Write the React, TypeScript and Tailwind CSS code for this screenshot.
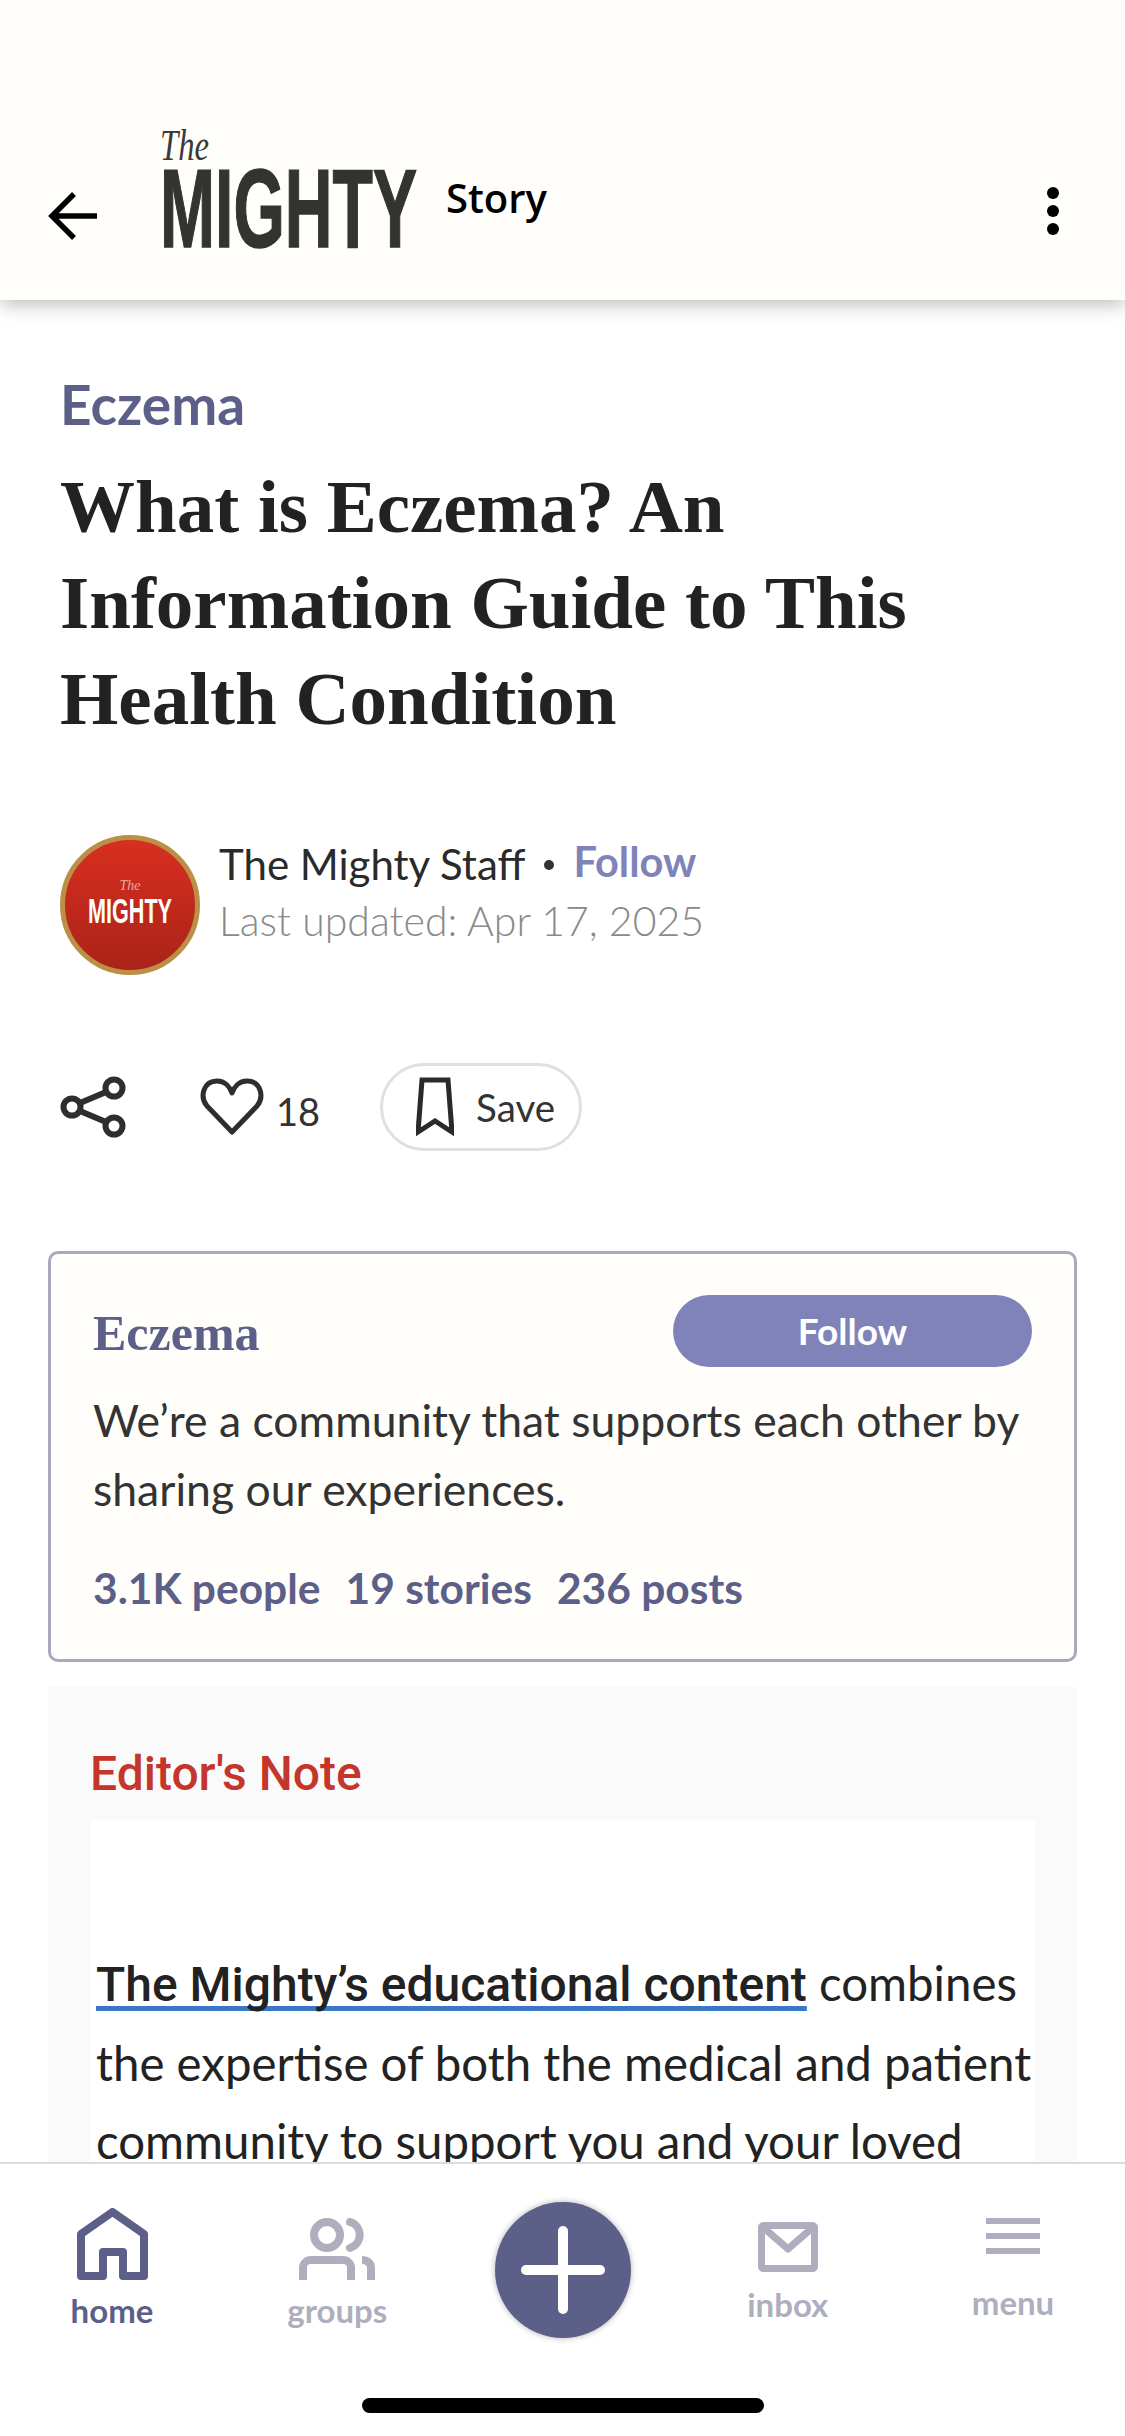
const lato = 'font-["Lato",sans-serif]'

function MightyLogo() {
  return (
    <svg width="262" height="124" viewBox="0 0 262 124" className="block">
      <text x="1" y="34" fontFamily="Liberation Serif" fontStyle="italic" fontSize="44" fill="#3a3a38" textLength="49" lengthAdjust="spacingAndGlyphs">The</text>
      <text x="1" y="121" fontFamily="Liberation Sans" fontWeight="700" fontSize="112" fill="#333331" stroke="#333331" strokeWidth="1.5" textLength="257" lengthAdjust="spacingAndGlyphs">MIGHTY</text>
    </svg>
  )
}

function AvatarLogo() {
  return (
    <div className="w-[140px] h-[140px] shrink-0 rounded-full border-[5px] border-[#bb8f45] bg-gradient-to-b from-[#d82f20] to-[#aa2318] flex items-center justify-center">
      <svg width="100" height="64" viewBox="0 0 100 64">
        <text x="50" y="17" textAnchor="middle" fontFamily="Liberation Serif" fontStyle="italic" fontSize="14" fill="#f0a9a0">The</text>
        <text x="50" y="50" textAnchor="middle" fontFamily="Liberation Sans" fontWeight="700" fontSize="35" fill="#fff" textLength="84" lengthAdjust="spacingAndGlyphs">MIGHTY</text>
      </svg>
    </div>
  )
}

function NavItem({ label, active, icon, top }: { label: string; active?: boolean; icon: React.ReactNode; top: string }) {
  return (
    <div className={`w-[150px] flex flex-col items-center ${top}`}>
      {icon}
      <span className={`${lato} text-[33px] leading-[40px] font-bold ${active ? 'text-[#5c6088]' : 'text-[#aeaebe]'}`}>{label}</span>
    </div>
  )
}

export default function App() {
  return (
    <div className="w-[1125px] h-[2436px] bg-white flex flex-col overflow-hidden relative">
      {/* Header */}
      <header className="h-[300px] shrink-0 bg-[#fffefa] shadow-[0_4px_18px_rgba(0,0,0,0.28)] relative z-10 flex items-end pb-[50px] pl-[48px] pr-[66px]">
        <svg width="50" height="48" viewBox="0 0 50 48" fill="none" stroke="#000" strokeWidth="5.5" className="mb-[10px]">
          <path d="M49 24 H4 M26 2 L4 24 L26 46" />
        </svg>
        <div className="ml-[61px]"><MightyLogo /></div>
        <span className='font-["Open_Sans",sans-serif] ml-[25px] mb-[25px] text-[40px] leading-[54px] font-semibold text-black'>Story</span>
        <div className="ml-auto mb-[15px] flex flex-col gap-[6px]">
          <div className="w-[12px] h-[12px] rounded-full bg-black" />
          <div className="w-[12px] h-[12px] rounded-full bg-black" />
          <div className="w-[12px] h-[12px] rounded-full bg-black" />
        </div>
      </header>

      {/* Story */}
      <main className="flex-1 overflow-hidden">
        <div className="px-[60px] pt-[74px]">
          <div className={`${lato} text-[55px] leading-[60px] font-bold text-[#5c6088]`}>Eczema</div>
          <h1 className='font-["Liberation_Serif",serif] font-bold text-[75px] leading-[96px] text-[#222] mt-[25px]'>
            What is Eczema? An<br />Information Guide to This<br />Health Condition
          </h1>

          <div className="flex items-center gap-[19px] mt-[88px]">
            <AvatarLogo />
            <div className={`${lato} mb-[24px]`}>
              <div className="flex items-center leading-[58px]">
                <span className="text-[42px] text-[#2a2a2a] -mt-[2px]">The Mighty Staff</span>
                <span className="w-[10px] h-[10px] rounded-full bg-[#333] ml-[19px] mr-[19px]" />
                <span className="text-[41.5px] font-bold text-[#7f83b9] -mt-[8px]">Follow</span>
              </div>
              <div className="text-[41px] leading-[58px] font-light text-[#8a8a8a] -mt-[1px]">Last updated: Apr 17, 2025</div>
            </div>
          </div>

          <div className="flex items-center mt-[88px] h-[88px]">
            <svg width="67" height="62" viewBox="0 0 67 62" fill="none" stroke="#2e2e2e" strokeWidth="6">
              <circle cx="12" cy="31" r="8.5" />
              <circle cx="54" cy="12" r="8.5" />
              <circle cx="54" cy="50" r="8.5" />
              <path d="M20 27 L46 16 M20 35 L46 46" />
            </svg>
            <svg width="64" height="58" viewBox="0 0 64 58" fill="none" stroke="#2e2e2e" strokeWidth="5" className="ml-[73px]">
              <path d="M32 54 L7 28 C-1 18 4 3 17 3 C25 3 30 9 32 15 C34 9 39 3 47 3 C60 3 65 18 57 28 Z" strokeLinejoin="round" />
            </svg>
            <span className={`${lato} text-[38px] text-[#333] ml-[12px] mt-[8px]`}>18</span>
            <div className="ml-[60px] w-[202px] h-[88px] rounded-full border-[3px] border-[#e0e0e0] flex items-center pl-[33px]">
              <svg width="38" height="60" viewBox="0 0 38 60" fill="none" stroke="#2a2a2a" strokeWidth="5">
                <path d="M6 3 H32 L36 55 L19 44 L2 55 Z" />
              </svg>
              <span className={`${lato} text-[38.5px] text-[#333] ml-[22px] mt-[2px]`}>Save</span>
            </div>
          </div>
        </div>

        {/* Community card */}
        <section className="mx-[48px] mt-[100px] h-[411px] rounded-[10px] border-[3px] border-[#a9a9bd] bg-[#fffefa] px-[42px] pt-[41px]">
          <div className="flex items-start justify-between">
            <div className='font-["Liberation_Serif",serif] font-bold text-[50px] leading-[60px] text-[#5c6088] mt-[8px]'>Eczema</div>
            <div className={`${lato} w-[359px] h-[72px] rounded-full bg-[#7f83b9] text-white text-[37px] font-bold flex items-center justify-center`}>Follow</div>
          </div>
          <p className={`${lato} text-[44.5px] leading-[69px] text-[#333] mt-[18px]`}>We’re a community that supports each other by sharing our experiences.</p>
          <div className={`${lato} flex gap-[25px] text-[42.5px] font-bold text-[#5c6088] mt-[33px]`}>
            <span>3.1K people</span>
            <span>19 stories</span>
            <span>236 posts</span>
          </div>
        </section>

        {/* Editor's note */}
        <section className="mx-[48px] mt-[25px] bg-[#fafafa] px-[42px] pt-[58px] h-[600px]">
          <div className='font-["Roboto",sans-serif] font-medium text-[48px] leading-[58px] text-[#c4352b]'>Editor's Note</div>
          <div className={`${lato} bg-white mt-[17px] ml-[1px] pl-[5px] pt-[124px] text-[47.4px] leading-[78px] text-[#222] h-[500px]`}>
            <span className='font-["Roboto",sans-serif] font-medium text-[48px] underline decoration-[#3b78c4] decoration-[5px] underline-offset-[5px] [text-decoration-skip-ink:none]'>The Mighty’s educational content</span> combines the expertise of both the medical and patient community to support you and your loved
          </div>
        </section>
      </main>

      {/* Bottom nav */}
      <nav className="h-[274px] shrink-0 bg-white border-t-[2px] border-[#dcdcdc] relative z-10 flex justify-between px-[37px]">
        <NavItem
          label="home"
          active
          top="pt-[44px]"
          icon={
            <svg width="71" height="72" viewBox="0 0 71 72" fill="none" stroke="#5c6088" strokeWidth="8" strokeLinejoin="round" className="mb-[10px]">
              <path d="M4 68 V26 L35.5 4 L67 26 V68 H46 V44 H26 V68 Z" />
            </svg>
          }
        />
        <NavItem
          label="groups"
          top="pt-[54px]"
          icon={
            <svg width="76" height="62" viewBox="0 0 76 62" fill="none" stroke="#aeaebe" strokeWidth="8" strokeLinecap="round" className="mb-[10px]">
              <circle cx="28" cy="17" r="13" />
              <path d="M51 4 C64 8 64 26 51 30" />
              <path d="M4 62 V50 C4 45 8 42 12 42 H44 C48 42 52 45 52 50 V62" strokeLinecap="butt" />
              <path d="M63 42 C68 42 72 45 72 50 V62" strokeLinecap="butt" />
            </svg>
          }
        />
        <div className="w-[150px] flex justify-center pt-[38px]">
          <div className="w-[136px] h-[136px] rounded-full bg-[#5c6088] shadow-[0_0_6px_rgba(0,0,0,0.3)] flex items-center justify-center relative">
            <div className="w-[84px] h-[10px] rounded-full bg-white" />
            <div className="w-[10px] h-[88px] rounded-full bg-white absolute" />
          </div>
        </div>
        <NavItem
          label="inbox"
          top="pt-[58px]"
          icon={
            <svg width="60" height="50" viewBox="0 0 60 50" fill="none" stroke="#aeaebe" strokeWidth="7" strokeLinejoin="round" className="mb-[12px]">
              <rect x="3.5" y="3.5" width="53" height="43" rx="2" />
              <path d="M6 6 L30 27 L54 6" />
            </svg>
          }
        />
        <NavItem
          label="menu"
          top="pt-[54px]"
          icon={
            <div className="w-[54px] h-[36px] flex flex-col justify-between mb-[28px]">
              <div className="h-[6px] bg-[#aeaebe]" />
              <div className="h-[6px] bg-[#aeaebe]" />
              <div className="h-[6px] bg-[#aeaebe]" />
            </div>
          }
        />
        <div className="absolute left-[362px] bottom-[23px] w-[402px] h-[15px] rounded-full bg-black" />
      </nav>
    </div>
  )
}
